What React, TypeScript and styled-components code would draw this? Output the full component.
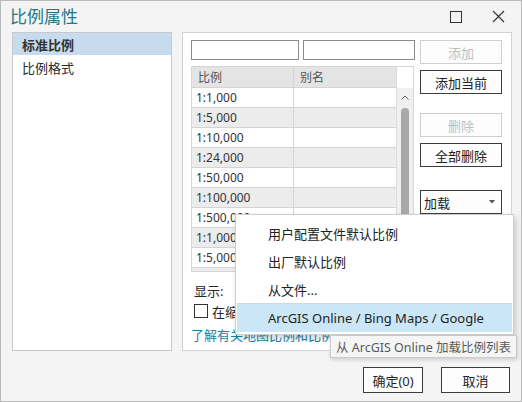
import React from 'react';
import styled, {createGlobalStyle} from 'styled-components';

const GlobalStyle = createGlobalStyle`
  html, body {
    margin: 0;
    padding: 0;
    background: #f3f3f3;
  }
  * {
    box-sizing: border-box;
  }
`;

const FONT = `"Noto Sans", "Noto Sans CJK SC", sans-serif`;

const Dialog = styled.div`
  position: relative;
  width: 522px;
  height: 402px;
  background: #f4f4f4;
  border: 1px solid #b9b9b9;
  font-family: ${FONT};
  color: #262626;
  display: flex;
  flex-direction: column;
  overflow: hidden;
`;

const TitleBar = styled.div`
  height: 31px;
  display: flex;
  align-items: center;
  padding: 0 2px 0 9px;
`;

const Title = styled.div`
  flex: 1;
  font-size: 17px;
  color: #1f7888;
  line-height: 1;
`;

const WinButton = styled.div`
  width: 42px;
  height: 24px;
  display: flex;
  align-items: center;
  justify-content: center;
  color: #333;
`;

const Main = styled.div`
  display: flex;
  gap: 10px;
  padding: 0 9px 0 11px;
  height: 319px;
`;

const Sidebar = styled.div`
  width: 160px;
  background: #fff;
  border: 1px solid #c9c9c9;
  display: flex;
  flex-direction: column;
`;

const NavItem = styled.div<{$active?: boolean}>`
  height: ${(p) => (p.$active ? 22 : 24)}px;
  display: flex;
  align-items: center;
  padding-left: 9px;
  font-size: 13px;
  font-weight: ${(p) => (p.$active ? 700 : 400)};
  background: ${(p) => (p.$active ? '#c6dcee' : 'transparent')};
  color: ${(p) => (p.$active ? '#333' : '#2a2a2a')};
`;

const Panel = styled.div`
  flex: 1;
  background: #fff;
  border: 1px solid #d2d2d2;
  padding: 7px 8px;
  display: flex;
  flex-direction: column;
`;

const TopArea = styled.div`
  display: flex;
  gap: 5px;
`;

const LeftCol = styled.div`
  width: 224px;
  display: flex;
  flex-direction: column;
`;

const InputRow = styled.div`
  display: flex;
  gap: 4px;
`;

const TextBox = styled.div<{$w: number}>`
  width: ${(p) => p.$w}px;
  height: 20px;
  border: 1px solid #8a8a8a;
  background: #fff;
`;

const Table = styled.div`
  margin-top: 6px;
  width: 223px;
  height: 206px;
  border: 1px solid #d6d6d6;
  display: flex;
  overflow: hidden;
`;

const Grid = styled.div`
  flex: 1;
  display: flex;
  flex-direction: column;
`;

const Row = styled.div<{$head?: boolean; $alt?: boolean}>`
  display: grid;
  grid-template-columns: 101px 1fr;
  flex: none;
  height: ${(p) => (p.$head ? 21 : 20)}px;
  background: ${(p) => (p.$head ? '#e4e4e4' : p.$alt ? '#ececec' : '#fff')};
  border-bottom: 1px solid #d4d4d4;
  font-size: 12px;
  color: ${(p) => (p.$head ? '#555' : '#333')};
`;

const Cell = styled.div`
  padding-left: 4px;
  display: flex;
  align-items: center;
  white-space: nowrap;
  overflow: hidden;
  & + & {
    border-left: 1px solid #d4d4d4;
  }
`;

const HeadCell = styled(Cell)`
  padding-left: 6px;
`;

const ScrollBar = styled.div`
  width: 17px;
  border-left: 1px solid #dcdcdc;
  background: #f0f0f0;
  display: flex;
  flex-direction: column;
  align-items: center;
`;

const ScrollHead = styled.div`
  width: 100%;
  height: 21px;
  background: #fff;
  flex: none;
`;

const ScrollArrow = styled.div`
  height: 18px;
  display: flex;
  align-items: center;
  justify-content: center;
`;

const Thumb = styled.div`
  width: 8px;
  flex: 1;
  margin-top: 2px;
  border-radius: 4px 4px 0 0;
  background: #a9a9a9;
`;

const ButtonCol = styled.div`
  width: 82px;
  display: flex;
  flex-direction: column;
`;

const Btn = styled.div<{$disabled?: boolean; $gap?: number}>`
  height: 24px;
  margin-top: ${(p) => p.$gap ?? 0}px;
  border: 1px solid ${(p) => (p.$disabled ? '#cfcfcf' : '#3c3c3c')};
  background: #fdfdfd;
  color: ${(p) => (p.$disabled ? '#bdbdbd' : '#222')};
  font-size: 13px;
  display: flex;
  align-items: center;
  justify-content: center;
`;

const DropBtn = styled(Btn)`
  justify-content: space-between;
  padding: 0 6px 0 3px;
`;

const Below = styled.div`
  margin-top: 11px;
  font-size: 13px;
  display: flex;
  flex-direction: column;
`;

const Label = styled.div`
  height: 17px;
  line-height: 17px;
  padding-left: 3px;
`;

const CheckRow = styled.div`
  margin-top: 2px;
  display: flex;
  align-items: center;
  gap: 4px;
  height: 18px;
`;

const Box = styled.div`
  width: 14px;
  height: 14px;
  border: 1px solid #333;
  background: #fff;
  margin-left: 3px;
`;

const Link = styled.div`
  margin-top: 5px;
  color: #1d7ea6;
  white-space: nowrap;
`;

const Footer = styled.div`
  flex: 1;
  display: flex;
  justify-content: flex-end;
  align-items: flex-start;
  padding: 16px 11px 0 0;
  gap: 18px;
`;

const FootBtn = styled.div<{$w: number}>`
  width: ${(p) => p.$w}px;
  height: 26px;
  border: 1px solid #3c3c3c;
  background: #fdfdfd;
  font-size: 13px;
  display: flex;
  align-items: center;
  justify-content: center;
`;

const Menu = styled.div`
  position: absolute;
  left: 234px;
  top: 213px;
  width: 279px;
  padding: 4px 0 2px;
  background: #fff;
  border: 1px solid #cdcdcd;
  box-shadow: 2px 3px 6px rgba(0, 0, 0, 0.18);
  font-size: 13px;
`;

const MenuItem = styled.div<{$hover?: boolean}>`
  height: 28px;
  display: flex;
  align-items: center;
  padding-left: 31px;
  color: #222;
  background: ${(p) => (p.$hover ? '#cbe6f7' : 'transparent')};
  margin: 0 1px;
`;

const Separator = styled.div`
  height: 1px;
  background: #cfd8de;
  margin: 0 1px;
`;

const Tooltip = styled.div`
  position: absolute;
  left: 329px;
  top: 334px;
  height: 23px;
  padding: 0 5px;
  display: flex;
  align-items: center;
  background: #f5f5f5;
  border: 1px solid #cbcbcb;
  box-shadow: 1px 2px 4px rgba(0, 0, 0, 0.15);
  font-size: 12.5px;
  color: #5a5a5a;
  white-space: nowrap;
`;

const scales = [
  '1:1,000',
  '1:5,000',
  '1:10,000',
  '1:24,000',
  '1:50,000',
  '1:100,000',
  '1:500,000',
  '1:1,000,000',
  '1:5,000,000',
  '1:10,000,000',
];

export default function App() {
  return (
    <>
      <GlobalStyle />
      <Dialog>
        <TitleBar>
          <Title>比例属性</Title>
          <WinButton>
            <svg width='12' height='12' viewBox='0 0 12 12'>
              <rect x='0.5' y='0.5' width='11' height='11' fill='none' stroke='#333' />
            </svg>
          </WinButton>
          <WinButton>
            <svg width='13' height='13' viewBox='0 0 13 13'>
              <path d='M1 1 L12 12 M12 1 L1 12' stroke='#333' strokeWidth='1.1' />
            </svg>
          </WinButton>
        </TitleBar>
        <Main>
          <Sidebar>
            <NavItem $active>标准比例</NavItem>
            <NavItem>比例格式</NavItem>
          </Sidebar>
          <Panel>
            <TopArea>
              <LeftCol>
                <InputRow>
                  <TextBox $w={108} />
                  <TextBox $w={112} />
                </InputRow>
                <Table>
                  <Grid>
                    <Row $head>
                      <HeadCell>比例</HeadCell>
                      <HeadCell>别名</HeadCell>
                    </Row>
                    {scales.map((s, i) => (
                      <Row key={s} $alt={i % 2 === 1}>
                        <Cell>{s}</Cell>
                        <Cell />
                      </Row>
                    ))}
                  </Grid>
                  <ScrollBar>
                    <ScrollHead />
                    <ScrollArrow>
                      <svg width='8' height='5' viewBox='0 0 8 5'>
                        <path d='M0.5 4.5 L4 1 L7.5 4.5' fill='none' stroke='#606060' />
                      </svg>
                    </ScrollArrow>
                    <Thumb />
                  </ScrollBar>
                </Table>
              </LeftCol>
              <ButtonCol>
                <Btn $disabled>添加</Btn>
                <Btn $gap={6}>添加当前</Btn>
                <Btn $disabled $gap={19}>删除</Btn>
                <Btn $gap={6}>全部删除</Btn>
                <DropBtn $gap={23}>
                  <span>加载</span>
                  <svg width='6' height='4' viewBox='0 0 6 4'>
                    <path d='M0 0 L6 0 L3 3.5 Z' fill='#555' />
                  </svg>
                </DropBtn>
              </ButtonCol>
            </TopArea>
            <Below>
              <Label>显示:</Label>
              <CheckRow>
                <Box />
                <span>在缩放至比例时显示比例别名</span>
              </CheckRow>
              <Link>了解有关地图比例和比例属性的详细信息</Link>
            </Below>
          </Panel>
        </Main>
        <Footer>
          <FootBtn $w={60}>确定(0)</FootBtn>
          <FootBtn $w={69}>取消</FootBtn>
        </Footer>
        <Menu>
          <MenuItem>用户配置文件默认比例</MenuItem>
          <MenuItem>出厂默认比例</MenuItem>
          <MenuItem>从文件...</MenuItem>
          <Separator />
          <MenuItem $hover>ArcGIS Online / Bing Maps / Google</MenuItem>
        </Menu>
        <Tooltip>从 ArcGIS Online 加载比例列表</Tooltip>
      </Dialog>
    </>
  );
}
